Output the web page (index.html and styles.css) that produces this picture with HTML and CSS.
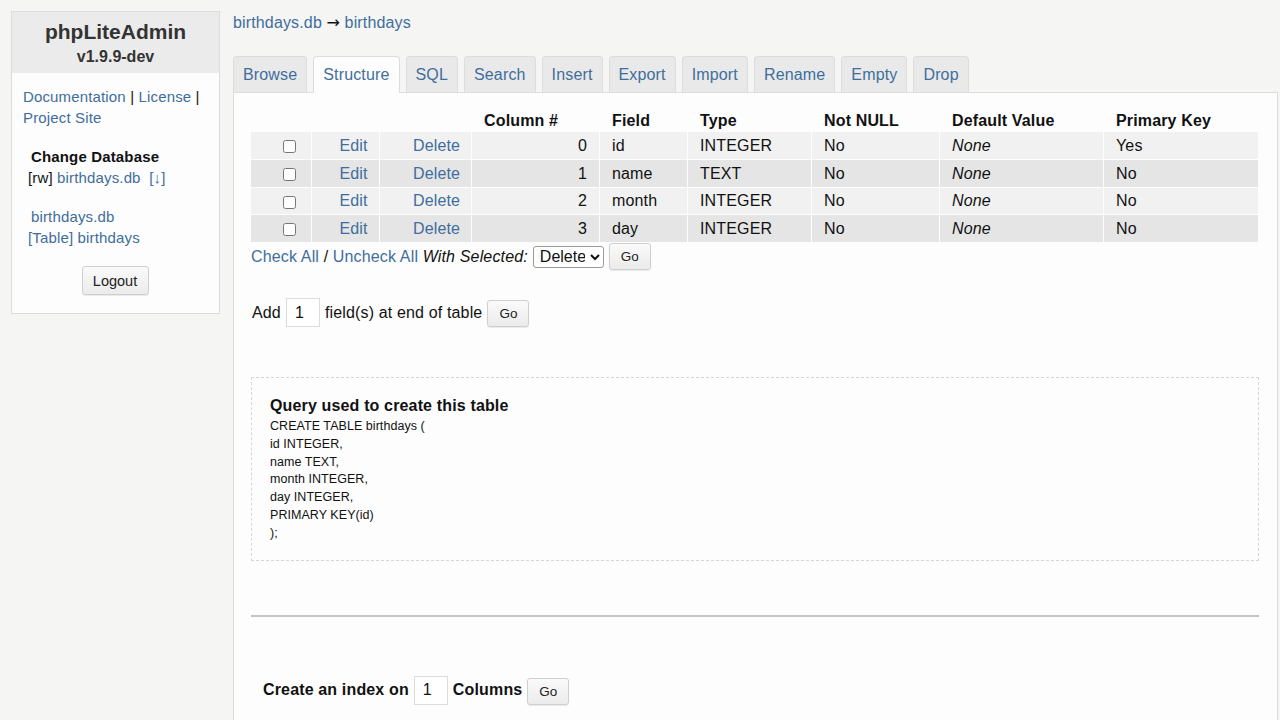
FILE: index.html
```html
<!DOCTYPE html>
<html>
<head>
<meta charset="utf-8">
<title>phpLiteAdmin</title>
<link rel="stylesheet" href="styles.css">
</head>
<body>
<div class="page">
  <aside class="sidebar">
    <div class="side-head">
      <div class="app-title">phpLiteAdmin</div>
      <div class="app-version">v1.9.9-dev</div>
    </div>
    <div class="side-body">
      <div class="side-links"><a href="#">Documentation</a> | <a href="#">License</a> | <a href="#">Project Site</a></div>
      <div class="change-db">Change Database</div>
      <div class="db-line">[rw] <a href="#">birthdays.db</a>&nbsp;&nbsp;<a href="#">[↓]</a></div>
      <div class="db-name"><a href="#">birthdays.db</a></div>
      <div class="table-link"><a href="#">[Table] birthdays</a></div>
      <div class="logout-wrap"><button class="btn logout">Logout</button></div>
    </div>
  </aside>

  <main class="main">
    <div class="crumb"><a href="#">birthdays.db</a> <span class="arrow">→</span> <a href="#">birthdays</a></div>
    <nav class="tabs">
      <a class="tab" href="#">Browse</a>
      <a class="tab active" href="#">Structure</a>
      <a class="tab" href="#">SQL</a>
      <a class="tab" href="#">Search</a>
      <a class="tab" href="#">Insert</a>
      <a class="tab" href="#">Export</a>
      <a class="tab" href="#">Import</a>
      <a class="tab" href="#">Rename</a>
      <a class="tab" href="#">Empty</a>
      <a class="tab" href="#">Drop</a>
    </nav>
    <section class="panel">
      <table class="struct">
        <colgroup>
          <col class="c-chk"><col class="c-edit"><col class="c-del"><col class="c-num"><col class="c-field"><col class="c-type"><col class="c-null"><col class="c-def"><col class="c-pk">
        </colgroup>
        <thead>
          <tr>
            <th></th><th></th><th></th>
            <th>Column #</th><th>Field</th><th>Type</th><th>Not NULL</th><th>Default Value</th><th>Primary Key</th>
          </tr>
        </thead>
        <tbody>
          <tr class="odd">
            <td class="ctr"><input type="checkbox"></td><td class="ctr"><a href="#">Edit</a></td><td class="ctr del"><a href="#">Delete</a></td>
            <td class="num">0</td><td>id</td><td>INTEGER</td><td>No</td><td><i>None</i></td><td>Yes</td>
          </tr>
          <tr class="even">
            <td class="ctr"><input type="checkbox"></td><td class="ctr"><a href="#">Edit</a></td><td class="ctr del"><a href="#">Delete</a></td>
            <td class="num">1</td><td>name</td><td>TEXT</td><td>No</td><td><i>None</i></td><td>No</td>
          </tr>
          <tr class="odd">
            <td class="ctr"><input type="checkbox"></td><td class="ctr"><a href="#">Edit</a></td><td class="ctr del"><a href="#">Delete</a></td>
            <td class="num">2</td><td>month</td><td>INTEGER</td><td>No</td><td><i>None</i></td><td>No</td>
          </tr>
          <tr class="even">
            <td class="ctr"><input type="checkbox"></td><td class="ctr"><a href="#">Edit</a></td><td class="ctr del"><a href="#">Delete</a></td>
            <td class="num">3</td><td>day</td><td>INTEGER</td><td>No</td><td><i>None</i></td><td>No</td>
          </tr>
        </tbody>
      </table>

      <div class="check-row">
        <a href="#">Check All</a>&nbsp;/&nbsp;<a href="#">Uncheck All</a>&nbsp;<i>With Selected:</i>
        <select class="sel"><option>Delete</option></select>
        <button class="btn go">Go</button>
      </div>

      <div class="add-row">
        <span>Add</span>
        <input class="num-input" type="text" value="1">
        <span>field(s) at end of table</span>
        <button class="btn go">Go</button>
      </div>

      <div class="query-box">
        <div class="query-title">Query used to create this table</div>
        <div class="query-sql">CREATE TABLE birthdays (<br>id INTEGER,<br>name TEXT,<br>month INTEGER,<br>day INTEGER,<br>PRIMARY KEY(id)<br>);</div>
      </div>

      <hr class="rule">

      <div class="index-row">
        <b>Create an index on</b>
        <input class="num-input" type="text" value="1">
        <b>Columns</b>
        <button class="btn go">Go</button>
      </div>
    </section>
  </main>
</div>
</body>
</html>
```

FILE: styles.css
```css
* { box-sizing: border-box; }
html, body {
  margin: 0;
  padding: 0;
  background: #f5f5f4;
  font-family: "Liberation Sans", Arial, Helvetica, sans-serif;
  color: #111;
  height: 720px;
  overflow: hidden;
  letter-spacing: 0.15px;
}
a { color: #3f6e9c; text-decoration: none; }

.page {
  display: flex;
  align-items: flex-start;
  padding: 11px 2px 0 11px;
  gap: 13px;
}

/* Sidebar */
.sidebar {
  width: 209px;
  flex: none;
  background: #fdfdfd;
  border: 1px solid #dcdcdc;
}
.side-head {
  background: #ebebeb;
  text-align: center;
  padding: 8px 0 6px;
  color: #333;
  font-weight: bold;
  letter-spacing: 0;
}
.app-title { font-size: 21px; line-height: 24px; }
.app-version { font-size: 16px; line-height: 21px; margin-top: 2px; }
.side-body {
  padding: 13px 12px 18px 11px;
  font-size: 15px;
  line-height: 21px;
}
.side-links { color: #111; }
.change-db { font-weight: bold; margin-top: 18px; padding-left: 8px; color: #111; }
.db-line { padding-left: 5px; color: #111; }
.db-name { margin-top: 18px; padding-left: 8px; }
.table-link { padding-left: 5px; }
.logout-wrap { text-align: center; margin-top: 18px; }

/* Buttons & inputs */
.btn {
  font-family: "Liberation Sans", Arial, Helvetica, sans-serif;
  background: linear-gradient(#fafafa, #ebebeb);
  border: 1px solid #cfcfcf;
  border-radius: 3px;
  box-shadow: 0 1px 1px rgba(0,0,0,0.08);
  color: #222;
  padding: 0;
  letter-spacing: 0;
}
.logout { width: 67px; height: 29px; font-size: 14.5px; }
.go { width: 42px; height: 27px; font-size: 13.5px; }
.num-input {
  width: 34px;
  height: 29px;
  border: 1px solid #dcdcdc;
  background: #fff;
  font-family: "Liberation Sans", Arial, sans-serif;
  font-size: 16px;
  padding: 0 0 0 8px;
  color: #111;
}
.sel {
  font-family: "Liberation Sans", Arial, sans-serif;
  font-size: 16px;
  height: 22px;
  width: 71px;
  border: 1px solid #9a9a9a;
  border-radius: 3px;
  background: #fff;
  color: #111;
  padding: 0 2px;
}

/* Main */
.main { width: 1045px; flex: none; }
.crumb { font-size: 16px; line-height: 19px; padding-top: 2px; }
.arrow { font-family: "DejaVu Sans", sans-serif; font-size: 16px; letter-spacing: 0; }
.tabs {
  display: flex;
  gap: 6px;
  margin-top: 24px;
  position: relative;
  z-index: 1;
}
.tab {
  display: block;
  font-size: 16px;
  line-height: 19px;
  padding: 8px 9px 8px;
  background: #e9e9e9;
  border: 1px solid #dcdcdc;
  border-bottom: none;
  border-radius: 4px 4px 0 0;
  color: #3f6e9c;
}
.tab.active {
  background: #fdfdfd;
  margin-bottom: -1px;
  padding-bottom: 9px;
}
.panel {
  background: #fdfdfd;
  border: 1px solid #dcdcdc;
  padding: 17px 18px 0 17px;
  height: 640px;
}

/* Structure table */
.struct {
  width: 1009px;
  border-collapse: separate;
  border-spacing: 1px;
  table-layout: fixed;
  font-size: 16px;
  line-height: 19px;
  margin-left: -1px;
}
.c-chk { width: 60px; }
.c-edit { width: 67px; }
.c-del { width: 91px; }
.c-num { width: 127px; }
.c-field { width: 87px; }
.c-type { width: 123px; }
.c-null { width: 127px; }
.c-def { width: 163px; }
.c-pk { width: 154px; }
.struct th {
  text-align: left;
  padding: 0 12px 1px;
  font-weight: bold;
  color: #111;
}
.struct td {
  height: 26.75px;
  padding: 0 12px;
  color: #111;
  white-space: nowrap;
  vertical-align: middle;
}
.struct td.ctr { text-align: center; padding: 0 0 0 16px; }
.struct td.del { padding-left: 22px; }
.struct td.num { text-align: right; }
.struct tr.odd td { background: #f1f1f1; }
.struct tr.even td { background: #e5e5e5; }
.struct input[type=checkbox] { margin: 0; width: 13px; height: 13px; vertical-align: middle; display: inline-block; }

.check-row {
  display: flex;
  align-items: center;
  height: 27px;
  font-size: 16px;
  margin-top: 0;
}
.check-row .sel { margin-left: 5px; }
.check-row .go { margin-left: 5px; }

.add-row {
  display: flex;
  align-items: center;
  gap: 5px;
  font-size: 16px;
  margin-top: 28px;
  padding-left: 1px;
}
.add-row .go { margin-left: 0; margin-top: 2px; }

.query-box {
  margin-top: 50px;
  border: 1px dashed #d6d6d6;
  padding: 18px 18px 17px;
  width: 1008px;
}
.query-title { font-weight: bold; font-size: 16px; line-height: 19px; }
.query-sql { font-size: 12.5px; line-height: 17.8px; margin-top: 3px; color: #111; letter-spacing: 0.05px; }

.rule {
  margin: 54px 0 0;
  border: none;
  border-top: 2px solid #c4c4c4;
  width: 1008px;
}

.index-row {
  display: flex;
  align-items: center;
  gap: 5px;
  font-size: 16px;
  margin-top: 59px;
  padding-left: 12px;
}
.index-row .go { margin-left: 0; margin-top: 2px; }
```
